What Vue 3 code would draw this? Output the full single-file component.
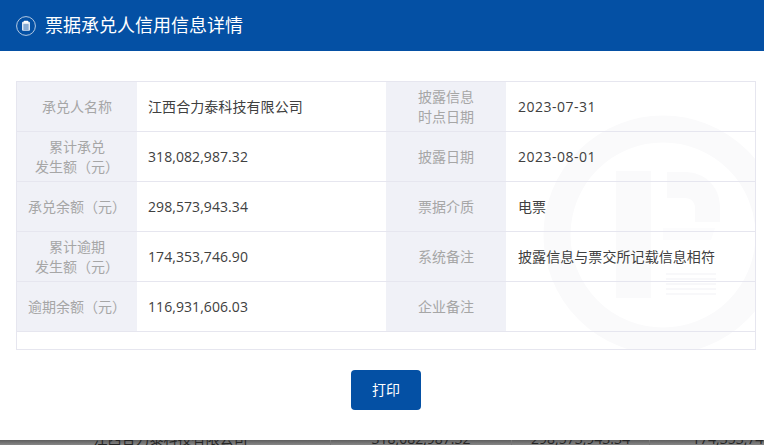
<script setup>
const rows = [
  { l1: ['承兑人名称'], v1: '江西合力泰科技有限公司', l2: ['披露信息', '时点日期'], v2: '2023-07-31', date: true },
  { l1: ['累计承兑', '发生额（元）'], v1: '318,082,987.32', l2: ['披露日期'], v2: '2023-08-01', date: true },
  { l1: ['承兑余额（元）'], v1: '298,573,943.34', l2: ['票据介质'], v2: '电票' },
  { l1: ['累计逾期', '发生额（元）'], v1: '174,353,746.90', l2: ['系统备注'], v2: '披露信息与票交所记载信息相符' },
  { l1: ['逾期余额（元）'], v1: '116,931,606.03', l2: ['企业备注'], v2: '' },
]
</script>

<template>
  <div class="page">
    <div class="modal">
      <header class="head">
        <svg class="head-icon" width="20" height="20" viewBox="0 0 20 20">
          <circle cx="10" cy="10" r="9.4" fill="none" stroke="#c9d8ea" stroke-width="0.9" />
          <rect x="6" y="5.8" width="8" height="9" rx="1" fill="#dfe8f3" />
          <rect x="7.8" y="4.8" width="4.4" height="2" rx="0.5" fill="#fff" />
          <path d="M7.4 9h5.2M7.4 11h5.2M7.4 13h5.2" stroke="#0450a4" stroke-width="0.8" />
        </svg>
        <h1 class="title">票据承兑人信用信息详情</h1>
      </header>
      <main class="body">
        <div class="table">
          <svg class="mark" width="240" height="240" viewBox="0 0 240 240">
            <circle cx="120" cy="120" r="106" fill="none" stroke="#fafafb" stroke-width="27" />
            <rect x="73" y="56" width="35" height="127" fill="#fafafb" />
            <path d="M124 57h18c20 0 35 15 35 35v15h-25V93c0-6-4-10-10-10h-18z" fill="#fafafb" />
            <path d="M120 113h52l-4 12h-48z" fill="#fcfcfd" />
            <path d="M123 159h50M123 164h50M123 169h50M123 174h50M123 179h50" stroke="#f8f8fa" stroke-width="2" />
          </svg>
          <div v-for="(row, i) in rows" :key="i" class="row">
            <div class="label"><span v-for="t in row.l1" :key="t">{{ t }}</span></div>
            <div class="value">{{ row.v1 }}</div>
            <div class="label"><span v-for="t in row.l2" :key="t">{{ t }}</span></div>
            <div class="value second" :class="{ date: row.date }">{{ row.v2 }}</div>
          </div>
        </div>
        <div class="actions">
          <button class="print" type="button">打印</button>
        </div>
      </main>
    </div>
    <div class="behind">
      <div class="behind-row">
        <span class="cell">江西合力泰科技有限公司</span>
        <span class="cell">318,082,987.32</span>
        <span class="cell">298,573,943.34</span>
        <span class="cell">174,353,746.90</span>
      </div>
    </div>
  </div>
</template>

<style>
html, body { margin: 0; background: #fff; overflow: hidden; }
</style>

<style scoped>
.page {
  width: 764px;
  height: 445px;
  overflow: hidden;
  display: flex;
  flex-direction: column;
  font-family: "Open Sans", "Noto Sans CJK SC", sans-serif;
}
.modal { height: 440px; background: #fff; flex: none; }
.head {
  height: 51px;
  background: #0450a4;
  display: flex;
  align-items: center;
  padding-left: 16px;
  gap: 9px;
}
.head-icon { flex: none; margin-top: 1px; }
.title {
  margin: 0 0 3px;
  color: #fff;
  font-size: 18px;
  font-weight: 400;
  line-height: 48px;
  font-family: "Noto Sans CJK SC", sans-serif;
}
.body { padding: 30px 8px 0 16px; }
.table {
  position: relative;
  overflow: hidden;
  width: 738px;
  height: 267px;
  border: 1px solid #e6e6ef;
}
.mark { position: absolute; left: 526px; top: 33px; }
.row {
  position: relative;
  height: 49px;
  border-bottom: 1px solid #e6e6ef;
  display: grid;
  grid-template-columns: 120px 249px 120px 249px;
}
.label {
  background: #f0f1f7;
  color: #a6a6a6;
  font-size: 14px;
  line-height: 20px;
  padding-bottom: 2px;
  display: flex;
  flex-direction: column;
  align-items: center;
  justify-content: center;
  font-family: "Noto Sans CJK SC", sans-serif;
}
.value {
  display: flex;
  align-items: center;
  padding: 0 0 1px 11px;
  color: #404040;
  font-size: 14px;
  letter-spacing: 0.07px;
}
.value.second { padding-left: 12px; }
.value.date { letter-spacing: 0.5px; }
.actions { display: flex; justify-content: center; padding-top: 20px; }
.print {
  width: 70px;
  height: 40px;
  padding: 0 0 2px;
  border: 0;
  border-radius: 4px;
  background: #0450a4;
  color: #fff;
  font-size: 14px;
  font-family: "Noto Sans CJK SC", sans-serif;
}
.behind {
  height: 5px;
  overflow: hidden;
  background: linear-gradient(#5e5e5e, #878787);
}
.behind-row {
  margin-top: -11px;
  margin-left: 11px;
  height: 20px;
  width: 840px;
  display: grid;
  grid-template-columns: 320px 181px 138px 184px;
  color: #262626;
  font-size: 14px;
  line-height: 20px;
}
.cell {
  text-align: center;
  border-right: 1px solid #777;
  white-space: nowrap;
}
</style>
